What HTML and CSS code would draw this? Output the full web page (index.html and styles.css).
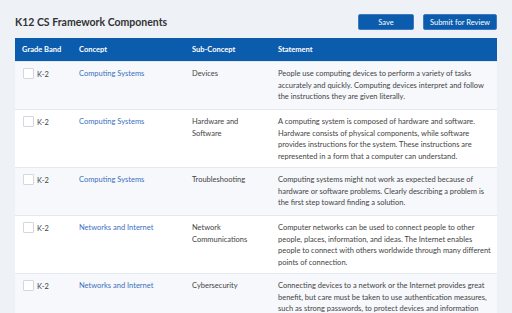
FILE: index.html
```html
<!DOCTYPE html>
<html lang="en">

<head>
    <meta charset="UTF-8">
    <meta name="viewport" content="width=device-width, initial-scale=1.0">
    <title>K12 CS Framework Components</title>
    <link rel="stylesheet" href="styles.css">
</head>

<body>
    <div class="page">
        <div class="toolbar">
            <h1>K12 CS Framework Components</h1>
            <div class="actions">
                <button class="btn btn-save" type="button">Save</button>
                <button class="btn btn-submit" type="button">Submit for Review</button>
            </div>
        </div>

        <table class="components">
            <colgroup>
                <col class="col-grade">
                <col class="col-concept">
                <col class="col-sub">
                <col class="col-statement">
            </colgroup>
            <thead>
                <tr>
                    <th>Grade Band</th>
                    <th>Concept</th>
                    <th>Sub-Concept</th>
                    <th>Statement</th>
                </tr>
            </thead>
            <tbody>
                <tr>
                    <td><span class="check"></span>K-2</td>
                    <td><a href="#">Computing Systems</a></td>
                    <td>Devices</td>
                    <td>People use computing devices to perform a variety of tasks accurately and quickly. Computing devices interpret and follow the instructions they are given literally.</td>
                </tr>
                <tr>
                    <td><span class="check"></span>K-2</td>
                    <td><a href="#">Computing Systems</a></td>
                    <td>Hardware and Software</td>
                    <td>A computing system is composed of hardware and software. Hardware consists of physical components, while software provides instructions for the system. These instructions are represented in a form that a computer can understand.</td>
                </tr>
                <tr>
                    <td><span class="check"></span>K-2</td>
                    <td><a href="#">Computing Systems</a></td>
                    <td>Troubleshooting</td>
                    <td>Computing systems might not work as expected because of hardware or software problems. Clearly describing a problem is the first step toward finding a solution.</td>
                </tr>
                <tr>
                    <td><span class="check"></span>K-2</td>
                    <td><a href="#">Networks and Internet</a></td>
                    <td>Network Communications</td>
                    <td>Computer networks can be used to connect people to other people, places, information, and ideas. The Internet enables people to connect with others worldwide through many different points of connection.</td>
                </tr>
                <tr>
                    <td><span class="check"></span>K-2</td>
                    <td><a href="#">Networks and Internet</a></td>
                    <td>Cybersecurity</td>
                    <td>Connecting devices to a network or the Internet provides great benefit, but care must be taken to use authentication measures, such as strong passwords, to protect devices and information from unauthorized access.</td>
                </tr>
            </tbody>
        </table>
    </div>
</body>

</html>
```

FILE: styles.css
```css
body {
    margin: 0;
    background-color: #eef2f6;
    font-family: Lato, "Open Sans", sans-serif;
    color: #444;
    overflow: hidden;
}

.page {
    padding: 14px 15px 0 15px;
}

.toolbar {
    display: flex;
    justify-content: space-between;
    align-items: center;
    height: 16px;
    margin-bottom: 8px;
}

.toolbar h1 {
    margin: 0;
    font-size: 10.5px;
    font-weight: 700;
    color: #333;
}

.actions {
    display: flex;
    gap: 9px;
}

.btn {
    height: 16px;
    padding: 0;
    border: 1px solid #3f7bc2;
    border-radius: 2px;
    background-color: #0b5cad;
    color: #fff;
    font-family: inherit;
    font-size: 7.5px;
    cursor: pointer;
}

.btn-save {
    width: 56px;
}

.btn-submit {
    width: 74px;
}

.components {
    width: 482px;
    table-layout: fixed;
    border-collapse: collapse;
    font-size: 7.5px;
    line-height: 11.5px;
}

.col-grade {
    width: 57px;
}

.col-concept {
    width: 113px;
}

.col-sub {
    width: 86px;
}

.col-statement {
    width: 226px;
}

.components th {
    height: 23px;
    padding: 0 7px;
    background-color: #0b5cad;
    color: #fff;
    font-weight: 700;
    text-align: left;
}

.components tbody tr {
    height: 48px;
}

.components td {
    padding: 6px 7px 5px 7px;
    vertical-align: top;
    border-top: 1px solid #e4e9ef;
}

.components td:last-child {
    padding-right: 3px;
}

.components tbody tr:nth-child(odd) {
    background-color: #f6f8fb;
}

.components tbody tr:nth-child(even) {
    background-color: #fff;
}

.components td a {
    color: #3b70bf;
    text-decoration: none;
}

.check {
    display: inline-block;
    width: 9px;
    height: 9px;
    margin: 0 3px -2px 1px;
    border: 1px solid #d3d8de;
    border-radius: 1px;
    background-color: #fff;
}
```
